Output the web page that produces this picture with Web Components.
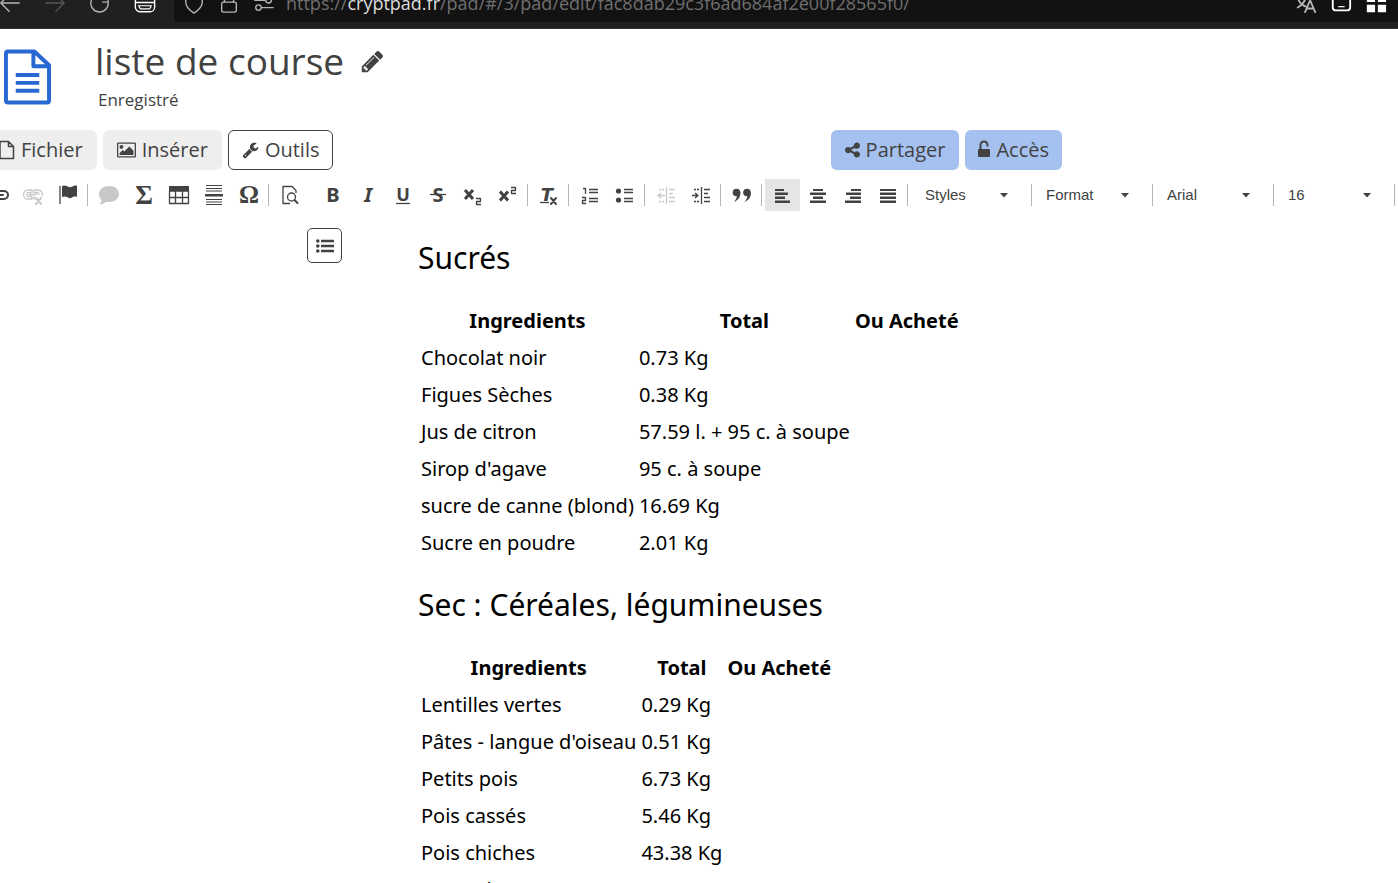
<!DOCTYPE html>
<html lang="fr">
<head>
<meta charset="utf-8">
<title>liste de course</title>
<style>
html,body{margin:0;height:100%}
body{background:#fff;color:#424242;font-family:"Noto Sans",sans-serif;overflow:hidden}
</style>
</head>
<body>
<pad-app></pad-app>
<script>
const ICONS = {
back:['0 0 24 24','<path d="M2 12h20M11 3l-9 9 9 9" class="s"/>'],
forward:['0 0 24 24','<path d="M22 12H2M13 3l9 9-9 9" class="s"/>'],
reload:['0 0 24 24','<path d="M21 12a9.500 9.500 0 1 1-4-7.500M21 4v7h-6" class="s"/>'],
keyboard:['0 0 24 24','<path d="M1.500 6v10.500a5 5 0 0 0 5 5h11a5 5 0 0 0 5-5V6z" class="s"/><path d="M2 11.500h20" class="s"/><path d="M5 15h14l-2 3.500H7z" class="o"/>'],
shield:['0 0 24 24','<path d="M12 2L3 5v6c0 6 4 9 9 12 5-3 9-6 9-12V5z" class="s"/>'],
lock:['0 0 24 24','<rect x="4" y="11" width="16" height="11" rx="2" class="s"/><path d="M7 11V7a5 5 0 0 1 10 0v4" class="s"/>'],
perms:['0 0 24 24','<circle cx="17" cy="9" r="3" class="s"/><path d="M2 9h11" class="s"/><circle cx="6" cy="17" r="3" class="s"/><path d="M10 17h12" class="s"/>'],
translate:['0 0 24 24','<path d="M2 5h12M8 2v3M3 17C8 14 11 10 12 5M4 9c2 4 5 6 8 7" class="s2"/><path d="M11 22l5.500-13L22 22M13 18h7" class="s2"/>'],
device:['0 0 24 24','<rect x="3" y="2" width="19" height="18" rx="3" class="s2"/><path d="M9 16h7" class="o"/>'],
apps:['0 0 24 24','<path d="M2 3h9v8H2zM14 3h9v8h-9zM2 14h9v8H2zM14 14h9v8h-9z"/>'],
doc:['0 0 48 56','<path d="M4 2h27l15 14v36a2 2 0 0 1-2 2H4a2 2 0 0 1-2-2V4a2 2 0 0 1 2-2zM30 2v15h16" fill="none" stroke="currentColor" stroke-width="4" stroke-linejoin="round"/><path d="M12 26h24M12 34h24M12 42h24" stroke="currentColor" stroke-width="4"/>'],
pencil:['0 0 1792 1792','<path d="M491 1536l91-91-235-235-91 91v107h128v128h107zm523-928q0-22-22-22-10 0-17 7l-542 542q-7 7-7 17 0 22 22 22 10 0 17-7l542-542q7-7 7-17zm-54-192l416 416-832 832h-416v-416zm683 96q0 53-37 90l-166 166-416-416 166-165q36-38 90-38 53 0 91 38l235 234q37 39 37 91z"/>'],
file:['0 0 16 20','<path d="M1 1.500h8.500l5 5v12H1zM9.500 1.500v5h5" fill="none" stroke="currentColor" stroke-width="1.500" stroke-linejoin="round"/>'],
image:['-64 0 1920 1792','<path d="M576 576q0 80-56 136t-136 56-136-56-56-136 56-136 136-56 136 56 56 136zm1024 384v448h-1408v-192l320-320 160 160 512-512zm96-704h-1600q-13 0-22.500 9.500t-9.500 22.500v1216q0 13 9.500 22.500t22.500 9.500h1600q13 0 22.500-9.500t9.500-22.500v-1216q0-13-9.500-22.500t-22.500-9.500zm160 32v1216q0 66-47 113t-113 47h-1600q-66 0-113-47t-47-113v-1216q0-66 47-113t113-47h1600q66 0 113 47t47 113z"/>'],
wrench:['0 0 1792 1792','<path d="M448 1472q0-26-19-45t-45-19-45 19-19 45 19 45 45 19 45-19 19-45zm644-420l-682 682q-37 37-90 37-52 0-91-37l-106-108q-38-36-38-90 0-53 38-91l681-681q39 98 114.500 173.500t173.500 114.500zm634-435q0 39-23 106-47 134-164.500 217.500t-258.500 83.500q-185 0-316.500-131.500t-131.500-316.500 131.500-316.500 316.500-131.500q58 0 121.500 16.500t107.500 46.500q16 11 16 28t-16 28l-293 169v224l193 107q5-3 79-48.500t135.500-81 70.500-35.500q15 0 23.500 10t8.500 25z"/>'],
share:['128 128 1536 1536','<path d="M1344 1024q133 0 226.500 93.500t93.500 226.500-93.500 226.500-226.500 93.500-226.500-93.500-93.500-226.500q0-12 2-34l-360-180q-92 86-218 86-133 0-226.500-93.500t-93.500-226.500 93.500-226.500 226.500-93.500q126 0 218 86l360-180q-2-22-2-34 0-133 93.500-226.500t226.500-93.500 226.500 93.500 93.500 226.500-93.500 226.500-226.500 93.500q-126 0-218-86l-360 180q2 22 2 34t-2 34l360 180q92-86 218-86z"/>'],
unlock:['0 0 12 20','<rect x="0" y="9" width="12" height="8" rx="1"/><path d="M2.500 9.500V5a3.500 3.500 0 0 1 7 0v1.500" fill="none" stroke="currentColor" stroke-width="2"/>'],
list:['0 0 18 14','<circle cx="1.800" cy="2" r="1.800"/><circle cx="1.800" cy="7" r="1.800"/><circle cx="1.800" cy="12" r="1.800"/><path d="M5 .8h13v2.400H5zM5 5.800h13v2.400H5zM5 10.800h13v2.400H5z"/>'],
link:['0 0 24 24','<path d="M10 8H6a4 4 0 0 0 0 8h4M14 8h4a4 4 0 0 1 0 8h-4M7 12h10" class="s2"/>'],
unlink:['0 0 24 24','<path d="M11 7H7a4.500 4.500 0 0 0 0 9h4v-2.500H8a2 2 0 0 1 0-4h3zM13 7h4a4.500 4.500 0 0 1 4 6.500M13 7v2.500h3a2 2 0 0 1 2 2.500M13 13.500V16h1M8 11.500h8" class="o"/><path d="M15 15l5 6M20 15l-5 6" class="s2"/>'],
flag:['0 0 24 24','<path d="M4 3v18" class="o"/><path d="M6 3c4-2 6 2 9 1s4-2 6-1v11c-3-1-4 0-6 1s-5-3-9-1z"/>'],
bubble:['0 0 24 24','<path d="M12 3c6 0 10 3.500 10 8s-4 8-10 8c-1 0-2 0-3-.3C7 20.500 5 21.500 2.500 21.500c1.500-1.500 2-3 2-4.500C3 15.500 2 13.500 2 11c0-4.500 4-8 10-8z"/>'],
sigma:['0 0 24 24','<text x="12" y="21" font-size="27" font-weight="700" font-family="Liberation Serif" text-anchor="middle">Σ</text>'],
table:['0 0 24 24','<path d="M2 3h20v5H2z"/><path d="M2.500 8h19v12.500h-19zM2 14.500h20M8.500 8v12M15.500 8v12" class="o"/>'],
rule:['0 0 24 24','<path d="M4 2.500h16M4 5.500h16M4 8h16M4 16.500h16M4 19h16M4 21.500h16" fill="none" stroke="currentColor"/><path d="M3 11h18v2.500H3z"/>'],
omega:['0 0 24 24','<text x="12" y="20" font-size="25" font-weight="700" font-family="Liberation Serif" text-anchor="middle">Ω</text>'],
preview:['0 0 24 24','<path d="M12 20.500H5v-17h9l4 4V10" class="o"/><circle cx="13.500" cy="14" r="4" class="o"/><path d="M16.500 17l3 3" class="s2"/>'],
bold:['0 0 24 24','<text x="12" y="19" font-size="20" font-weight="700" font-family="Noto Sans" text-anchor="middle">B</text>'],
italic:['0 0 24 24','<text x="12" y="19" font-size="20" font-weight="700" font-style="italic" font-family="Noto Sans" text-anchor="middle">I</text>'],
underline:['0 0 24 24','<text x="12" y="18" font-size="18" font-weight="700" font-family="Noto Sans" text-anchor="middle">U</text><path d="M5 20.500h14" class="o"/>'],
strike:['0 0 24 24','<text x="12" y="19" font-size="20" font-weight="700" font-family="Noto Sans" text-anchor="middle">S</text><path d="M4 11.500h16" class="o"/>'],
sub:['0 0 24 24','<path d="M4 7l8 9M12 7l-8 9" stroke="currentColor" stroke-width="3"/><path d="M15 15.500h4.500v3h-4v3H20" class="o"/>'],
sup:['0 0 24 24','<path d="M4 8.500l8 9M12 8.500l-8 9" stroke="currentColor" stroke-width="3"/><path d="M15 4.500h4.500v3h-4v3H20" class="o"/>'],
clear:['0 0 24 24','<text x="10" y="18" font-size="18" font-weight="700" font-style="italic" font-family="DejaVu Sans" text-anchor="middle">T</text><path d="M3 19.500h9" class="o"/><path d="M14 15l5 6M19 15l-5 6" class="s2"/>'],
ol:['0 0 24 24','<path d="M5 5.500h2.500V11M4 14.500h3.500v3h-3v3H8" class="o"/><path d="M11 6.500h9M11 9.500h9M11 15.500h9M11 18.500h9" class="o"/>'],
ul:['0 0 24 24','<circle cx="5.500" cy="8" r="2.600"/><circle cx="5.500" cy="17" r="2.600"/><path d="M11 6.500h9M11 9.500h9M11 15.500h9M11 18.500h9" class="o"/>'],
outdent:['0 0 24 24','<path d="M12.500 4v17M15 6.500h6M15 10.500h4M15 14.500h6M15 18.500h6M4 12.500h7M7 10l-3 2.500 3 2.500" class="o"/><path d="M5 6.500h6M5 18.500h6" class="o" stroke-dasharray="2 1"/>'],
indent:['0 0 24 24','<path d="M12.500 4v17M15 6.500h6M15 10.500h4M15 14.500h6M15 18.500h6M3 12.500h6M6 10l3 2.500-3 2.500" class="o"/><path d="M5 6.500h6M5 18.500h6" class="o" stroke-dasharray="2 1"/>'],
quote:['0 0 24 24','<circle cx="6.500" cy="9.500" r="3.800"/><path d="M10.300 9c.5 5-2 8-6.300 10 2-2.500 3-4.500 3-7z"/><circle cx="17" cy="9.500" r="3.800"/><path d="M20.800 9c.5 5-2 8-6.300 10 2-2.500 3-4.500 3-7z"/>'],
left:['0 0 24 24','<path d="M4 6h9v2H4zM4 9.500h13v2.500H4zM4 13.500h10V16H4zM4 17.500h15V20H4z"/>'],
center:['0 0 24 24','<path d="M7 6h10v2H7zM4 9.500h16v2.500H4zM7 13.500h10V16H7zM4 17.500h16V20H4z"/>'],
right:['0 0 24 24','<path d="M10 6h10v2H10zM5 9.500h15v2.500H5zM9 13.500h11V16H9zM4 17.500h16V20H4z"/>'],
justify:['0 0 24 24','<path d="M4 6h16v2H4zM4 9.500h16v2.500H4zM4 13.500h16V16H4zM4 17.500h16V20H4z"/>'],
caret:['0 0 8 5','<path d="M0 0h8L4 4.500z"/>']
};
const define = (name, html, setup) => customElements.define(name, class extends HTMLElement {
  constructor(){ super(); this.attachShadow({mode:'open'}).innerHTML = html; }
  connectedCallback(){ if (setup) setup(this, this.shadowRoot); }
});

define('pad-icon', `<style>
:host{display:block;flex:none;width:24px;height:24px}
svg{display:block;width:100%;height:100%;fill:currentColor;overflow:visible}
.s,.s2,.o{fill:none;stroke:currentColor;stroke-linecap:round;stroke-linejoin:round;stroke-width:1.5}
.s2{stroke-width:2}.o{stroke-width:1.3;stroke-linecap:butt}
</style><svg aria-hidden="true"></svg>`, (el, root) => {
  const [box, body] = ICONS[el.getAttribute('name')];
  const svg = root.querySelector('svg');
  svg.setAttribute('viewBox', box);
  svg.innerHTML = body;
});

define('browser-bar', `<style>
:host{display:flex;align-items:flex-end;box-sizing:border-box;height:29px;overflow:hidden;background:#202020;border-bottom:1px solid #303030;padding-bottom:6px;color:#b5b5b5}
nav{display:flex;align-items:center;height:38px;gap:23px;width:174px;flex:none;box-sizing:border-box}
nav button:first-child{margin-left:-1px}
button{all:unset;display:block}
button:disabled{color:#555}
.field{flex:1;min-width:0;height:38px;display:flex;align-items:center;gap:13px;background:#121212;border-radius:0 0 0 4px;padding:0 11px 0 9px}
.lit{color:#fff}
a{color:#6f6f6f;text-decoration:none;font:18px/24px "Open Sans",sans-serif;white-space:nowrap;flex:1;margin-left:-2px}
b{font-weight:400;color:#ddd}
pad-icon{width:22px;height:22px}
</style>
<nav><button aria-label="Précédent"><pad-icon name="back"></pad-icon></button><button disabled aria-label="Suivant"><pad-icon name="forward"></pad-icon></button><button aria-label="Actualiser"><pad-icon name="reload"></pad-icon></button><button class="lit" aria-label="Clavier"><pad-icon name="keyboard"></pad-icon></button></nav>
<div class="field"><pad-icon name="shield"></pad-icon><pad-icon name="lock"></pad-icon><pad-icon name="perms"></pad-icon>
<a href="#">https://<b>cryptpad.fr</b>/pad/#/3/pad/edit/fac8dab29c3f6ad684af2e00f28565f0/</a>
<pad-icon name="translate"></pad-icon><pad-icon class="lit" name="device"></pad-icon><pad-icon class="lit" name="apps"></pad-icon></div>`);

define('pad-title', `<style>
:host{display:flex;gap:44px;padding:8px 0 0 4px;height:84px;font-family:"Open Sans",sans-serif}
.doc{width:47px;height:56px;margin-top:12px;color:#2768d2}
.row{display:flex;align-items:center;gap:16px}
h1{margin:0;font-size:37px;line-height:48px;font-weight:400}
p{margin:0;padding-left:3px;font-size:17px;line-height:30px}
button{all:unset;display:block}
button pad-icon{width:25px;height:25px}
</style><pad-icon class="doc" name="doc"></pad-icon>
<div><div class="row"><h1>liste de course</h1><button aria-label="Renommer"><pad-icon name="pencil"></pad-icon></button></div><p>Enregistré</p></div>`);

define('pad-button', `<style>
:host{display:block}
button{display:flex;align-items:center;justify-content:center;gap:6px;box-sizing:border-box;height:40px;margin:0;padding:0 13px;border:1px solid transparent;border-radius:6px;background:#eee;color:inherit;font:20px/28px "Open Sans",sans-serif;white-space:nowrap}
:host([tone=outline]) button{background:#fff;border-color:#424242}
:host([tone=primary]) button{background:#a5c1ef}
:host([icon=unlock]) button{padding:0 12px}
pad-icon{width:17px;height:20px}
:host([icon=image]) pad-icon{width:19px}
:host([icon=file]) pad-icon{width:16px}
:host([icon=share]) pad-icon{width:15px}
:host([icon=unlock]) pad-icon{width:12px}
</style><button><slot></slot></button>`, (el, root) => {
  const icon = document.createElement('pad-icon');
  icon.setAttribute('name', el.getAttribute('icon'));
  root.querySelector('button').prepend(icon);
});

define('pad-menu', `<style>
:host{display:flex;gap:6px;padding:9px 336px 9px 0;margin-left:-15px}
.space{flex:1}
</style><pad-button icon="file">Fichier</pad-button><pad-button icon="image">Insérer</pad-button><pad-button icon="wrench" tone="outline">Outils</pad-button><span class="space"></span><pad-button icon="share" tone="primary">Partager</pad-button><pad-button icon="unlock" tone="primary">Accès</pad-button>`);

define('tool-button', `<style>
:host{display:block;flex:none}
button{display:grid;place-items:center;width:35px;height:32px;margin:0;padding:0;border:0;background:none;color:#424242}
:host([off]) button{color:#c8c8c8}
:host([on]) button{background:#e5e5e5}
pad-icon{width:24px;height:24px}
</style><button></button>`, (el, root) => {
  const name = el.getAttribute('name'), b = root.querySelector('button');
  b.setAttribute('aria-label', name);
  b.disabled = el.hasAttribute('off');
  b.innerHTML = `<pad-icon name="${name}"></pad-icon>`;
});

define('tool-select', `<style>
:host{display:grid;flex:none;width:120px;align-items:center}
select,pad-icon{grid-area:1/1}
select{appearance:none;width:100%;height:32px;margin:0;border:0;padding:0 0 0 14px;background:none;color:#424242;font:15px/20px "Liberation Sans",sans-serif}
pad-icon{justify-self:end;margin-right:23px;width:8px;height:5px;pointer-events:none}
</style><select></select><pad-icon name="caret"></pad-icon>`, (el, root) => {
  const s = root.querySelector('select'), v = el.getAttribute('value');
  s.setAttribute('aria-label', v);
  s.innerHTML = `<option>${v}</option>`;
});

define('pad-toolbar', `<style>
:host{display:flex;align-items:center;height:32px;margin-left:-20px;overflow:hidden}
i{flex:none;width:1px;height:22px;background:#b4b4b4;margin:0 3px 0 2px}
.gap{background:none;width:3px}
tool-select + i{margin:0}
</style>` + [
  ['link','unlink*','flag'],['bubble*','sigma','table','rule','omega'],['preview'],'gap',
  ['bold','italic','underline','strike','sub','sup'],['clear'],['ol','ul'],['outdent*','indent'],['quote'],['left+','center','right','justify']
].map((g, n, all) => g === 'gap' ? '<i class="gap"></i>' :
  g.map(t => `<tool-button name="${t.replace(/[*+]/,'')}"${t.endsWith('*')?' off':''}${t.endsWith('+')?' on':''}></tool-button>`).join('') + (all[n+1] === 'gap' ? '' : '<i></i>')
).join('') + ['Styles','Format','Arial','16'].map(v => `<tool-select value="${v}"></tool-select><i></i>`).join(''));

const LISTS = {
  sucres:[['Chocolat noir','0.73 Kg'],['Figues Sèches','0.38 Kg'],['Jus de citron','57.59 l. + 95 c. à soupe'],["Sirop d'agave",'95 c. à soupe'],['sucre de canne (blond)','16.69 Kg'],['Sucre en poudre','2.01 Kg']],
  sec:[['Lentilles vertes','0.29 Kg'],["Pâtes - langue d'oiseau",'0.51 Kg'],['Petits pois','6.73 Kg'],['Pois cassés','5.46 Kg'],['Pois chiches','43.38 Kg'],['Semoule','0.54 Kg']]
};
define('ingredient-list', `<style>
:host{display:block;color:#000}
h2{margin:0;font-size:30px;line-height:48px;font-weight:400}
table{margin:19px 0 19px -1px;border-spacing:3px 2px;font-size:20px;line-height:33px}
td,th{padding:1px;white-space:nowrap}
</style><h2><slot></slot></h2><table><thead><tr><th scope="col">Ingredients</th><th scope="col">Total</th><th scope="col">Ou Acheté</th></tr></thead><tbody></tbody></table>`, (el, root) => {
  root.querySelector('tbody').innerHTML = LISTS[el.getAttribute('list')].map(([a,b]) => `<tr><td>${a}</td><td>${b}</td><td></td></tr>`).join('');
});

define('pad-editor', `<style>
:host{display:grid;grid-template-columns:418px 1fr;padding-top:17px}
.outline{justify-self:end;margin-right:76px}
.outline button{display:grid;place-items:center;box-sizing:border-box;width:35px;height:35px;margin:0;padding:0;border:1px solid #424242;border-radius:5px;background:#fff;color:#424242}
.outline pad-icon{width:18px;height:14px}
main{padding-top:6px}
</style><div class="outline"><button aria-label="Plan"><pad-icon name="list"></pad-icon></button></div>
<main><ingredient-list list="sucres">Sucrés</ingredient-list><ingredient-list list="sec">Sec : Céréales, légumineuses</ingredient-list></main>`);

define('pad-app', `<style>:host{display:block;height:100vh;overflow:hidden;background:#fff}</style>
<browser-bar></browser-bar><pad-title></pad-title><pad-menu></pad-menu><pad-toolbar></pad-toolbar><pad-editor></pad-editor>`);
</script>
</body>
</html>
